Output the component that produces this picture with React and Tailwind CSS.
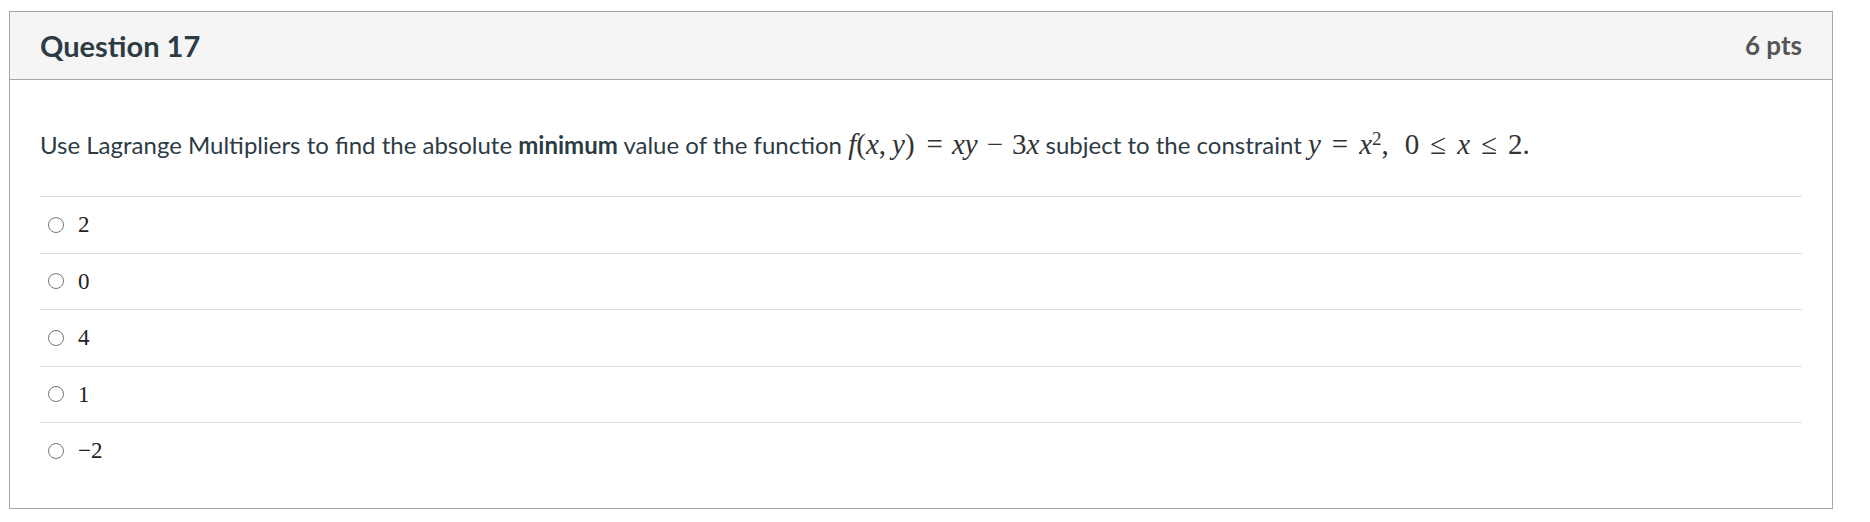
import React from "react";

const answers = ["2", "0", "4", "1", "\u22122"];

function M({ children }) {
  return <span className="italic">{children}</span>;
}

function Op({ children }) {
  return <span className="mx-[9px]">{children}</span>;
}

function Rel({ children }) {
  return <span className="mx-[11px]">{children}</span>;
}

const serif = { fontFamily: "'Liberation Serif', 'DejaVu Serif', serif" };

export default function App() {
  return (
    <div className="w-[1870px] h-[522px] bg-white pt-[11px] pl-[9px]" style={{ fontFamily: "Lato, 'Open Sans', sans-serif" }}>
      <div className="w-[1824px] h-[498px] border border-[#a6a6a6] flex flex-col">
        <div className="h-[68px] shrink-0 bg-[#f5f5f5] border-b border-[#a6a6a6] flex items-center justify-between px-[30px]">
          <span className="text-[29px] font-bold text-[#2d3b45]">Question 17</span>
          <span className="text-[26px] font-bold text-[#555]">6 pts</span>
        </div>
        <div className="px-[30px] pt-[47px]">
          <p className="h-[36px] overflow-visible text-[24px] leading-[36px] text-[#2d3b45] mb-[33px] whitespace-nowrap">
            Use Lagrange Multipliers to find the absolute <b>minimum</b> value of the function{" "}
            <span className="text-[29px] leading-none text-[#333]" style={serif}>
              <M>f</M>(<M>x</M>,<span className="ml-[6px]" /><M>y</M>)<span className="ml-[3px]" /><Op>=</Op><M>xy</M><Op>−</Op>3<M>x</M>
            </span>{" "}
            subject to the constraint{" "}
            <span className="text-[29px] leading-none text-[#333]" style={serif}>
              <M>y</M><Rel>=</Rel><M>x</M>
              <sup className="text-[19px]">2</sup>,<span className="ml-[16px]" />0<Rel>≤</Rel><M>x</M><Rel>≤</Rel>2.
            </span>
          </p>
          <div className="flex flex-col">
            {answers.map((a) => (
              <div key={a} className="h-[56.5px] border-t border-[#dddddd] flex items-center pl-[8px]">
                <span className="w-[16px] h-[16px] rounded-full border border-[#777] bg-white shrink-0" />
                <span className="ml-[14px] text-[23px] leading-none text-[#222]" style={serif}>
                  {a}
                </span>
              </div>
            ))}
          </div>
        </div>
      </div>
    </div>
  );
}
